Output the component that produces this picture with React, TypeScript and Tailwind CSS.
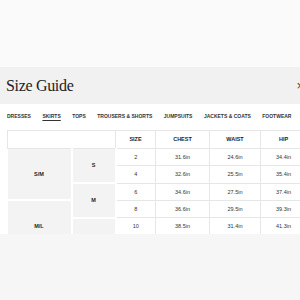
const ROWS = [
  { size: "2", chest: "31.6in", waist: "24.6in", hip: "34.4in" },
  { size: "4", chest: "32.6in", waist: "25.5in", hip: "35.4in" },
  { size: "6", chest: "34.6in", waist: "27.5in", hip: "37.4in" },
  { size: "8", chest: "36.6in", waist: "29.5in", hip: "39.3in" },
  { size: "10", chest: "38.5in", waist: "31.4in", hip: "41.3in" },
  // runs on below the fold of the scroll area
  { size: "", chest: "", waist: "", hip: "" },
];

const TABS = ["DRESSES", "SKIRTS", "TOPS", "TROUSERS & SHORTS", "JUMPSUITS", "JACKETS & COATS", "FOOTWEAR"];

// label cells that span several rows: [rowSpan, text]
const GROUP = new Map<number, [number, string]>([
  [0, [3, "S/M"]],
  [3, [3, "M/L"]],
]);
const LETTER = new Map<number, [number, string]>([
  [0, [2, "S"]],
  [2, [2, "M"]],
  [4, [2, ""]],
]);

export default function App() {
  const grayCell = "bg-[#f3f3f3] border-0 border-r-2 border-b-2 border-white text-center align-middle font-bold text-[#222]";
  const dataCell = "border border-[#e6e6e6] text-center align-middle text-[#333]";

  return (
    <div className="w-[300px] h-[300px] overflow-hidden bg-[#f6f6f6] font-['Liberation_Sans',Arial,sans-serif]">
      <div className="h-[67px] bg-[#fafafa]" />

      {/* title band */}
      <div className="h-[37px] bg-[#f1f1f1] flex items-center justify-between pl-[6px]">
        <h1 className="font-['Liberation_Serif',serif] text-[16px] tracking-[-0.02em] text-[#222] leading-none pt-[1px]">
          Size Guide
        </h1>
        <span className="text-[13px] text-[#444] leading-none translate-x-[4px]">×</span>
      </div>

      <div className="bg-white h-[130px] w-[320px]">
        {/* tabs */}
        <div className="flex gap-[11.5px] pl-[7px] h-[26px] items-center text-[5px] font-bold text-[#333] whitespace-nowrap">
          {TABS.map((t) => (
            <span key={t} className={t === "SKIRTS" ? "underline underline-offset-[1.5px]" : ""}>
              {t}
            </span>
          ))}
        </div>

        {/* table, clipped by the scroll area */}
        <div className="h-[104px] overflow-hidden pl-[7px]">
          <table className="border-collapse text-[5.5px] table-fixed w-[299px]">
            <colgroup>
              <col className="w-[64px]" />
              <col className="w-[44px]" />
              <col className="w-[40px]" />
              <col className="w-[54px]" />
              <col className="w-[51px]" />
              <col className="w-[46px]" />
            </colgroup>
            <thead>
              <tr className="h-[18px] font-bold text-[#222]">
                <th colSpan={2} className="border border-[#e6e6e6]" />
                <th className="border border-[#e6e6e6]">SIZE</th>
                <th className="border border-[#e6e6e6]">CHEST</th>
                <th className="border border-[#e6e6e6]">WAIST</th>
                <th className="border border-[#e6e6e6]">HIP</th>
              </tr>
            </thead>
            <tbody>
              {ROWS.map((r, i) => {
                const g = GROUP.get(i);
                const l = LETTER.get(i);
                return (
                  <tr key={i} className="h-[17.3px]">
                    {g && (
                      <td rowSpan={g[0]} className={grayCell}>
                        {g[1]}
                      </td>
                    )}
                    {l && (
                      <td rowSpan={l[0]} className={grayCell}>
                        {l[1]}
                      </td>
                    )}
                    <td className={dataCell}>{r.size}</td>
                    <td className={dataCell}>{r.chest}</td>
                    <td className={dataCell}>{r.waist}</td>
                    <td className={dataCell}>{r.hip}</td>
                  </tr>
                );
              })}
            </tbody>
          </table>
        </div>
      </div>
    </div>
  );
}
